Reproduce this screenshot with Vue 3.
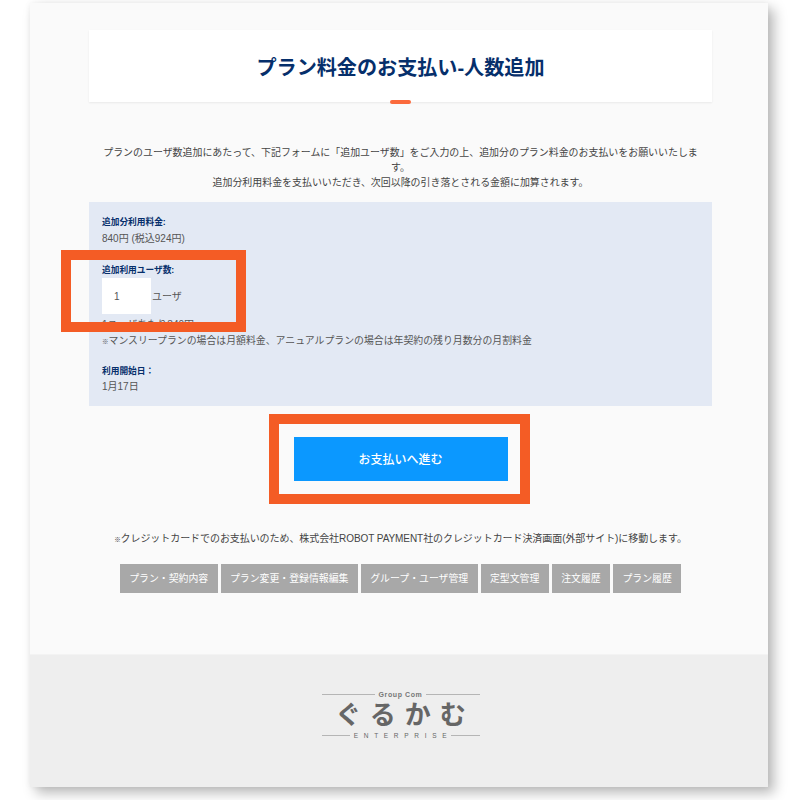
<template>
  <div class="page">
    <main class="window">
      <div class="content">
        <header class="title">
          <h1>プラン料金のお支払い-人数追加</h1>
          <span class="title-mark"></span>
        </header>

        <p class="lead">
          プランのユーザ数追加にあたって、下記フォームに「追加ユーザ数」をご入力の上、追加分のプラン料金のお支払いをお願いいたします。<br />
          追加分利用料金を支払いいただき、次回以降の引き落とされる金額に加算されます。
        </p>

        <section class="panel">
          <h2>追加分利用料金:</h2>
          <p class="price">840円 (税込924円)</p>
          <h2 class="users-label">追加利用ユーザ数:</h2>
          <div class="users">
            <span class="users-input">1</span>
            <span class="users-unit">ユーザ</span>
          </div>
          <p class="hidden-note">1ユーザあたり840円</p>
          <p class="note"><span class="kome">※</span>マンスリープランの場合は月額料金、アニュアルプランの場合は年契約の残り月数分の月割料金</p>
          <h2 class="start-label">利用開始日：</h2>
          <p class="start">1月17日</p>
        </section>

        <div class="actions">
          <button class="pay">お支払いへ進む</button>
        </div>

        <p class="card-note"><span class="kome">※</span>クレジットカードでのお支払いのため、株式会社ROBOT PAYMENT社のクレジットカード決済画面(外部サイト)に移動します。</p>

        <nav class="links">
          <a v-for="link in links" :key="link">{{ link }}</a>
        </nav>
      </div>

      <footer class="footer">
        <div class="logo">
          <div class="logo-line"><i></i><span class="logo-top">Group Com</span><i></i></div>
          <div class="logo-name">ぐるかむ</div>
          <div class="logo-line"><i></i><span class="logo-bottom">ENTERPRISE</span><i></i></div>
        </div>
      </footer>

      <div class="mark mark-users"></div>
      <div class="mark mark-pay"></div>
    </main>
  </div>
</template>

<script setup>
const links = ['プラン・契約内容', 'プラン変更・登録情報編集', 'グループ・ユーザ管理', '定型文管理', '注文履歴', 'プラン履歴']
</script>

<style>
body {
  background: #fff;
}
</style>

<style scoped>
.page {
  width: 800px;
  height: 800px;
  overflow: hidden;
  padding: 3px 0 0 30px;
  box-sizing: border-box;
  font-family: "Liberation Sans", "Noto Sans CJK JP", sans-serif;
  color: #444;
}

.window {
  position: relative;
  width: 738px;
  height: 784px;
  background: #fafafa;
  display: flex;
  flex-direction: column;
  box-shadow: 6px 6px 12px rgba(0, 0, 0, 0.28), 0 0 6px rgba(0, 0, 0, 0.05);
}

.content {
  height: 651px;
  padding: 27px 56px 0 59px;
  box-sizing: border-box;
}

.title {
  position: relative;
  height: 72px;
  background: #fff;
  box-shadow: 0 1px 2px rgba(0, 0, 0, 0.07);
  display: flex;
  align-items: center;
  justify-content: center;
}

.title h1 {
  margin: 0;
  font-size: 20.1px;
  font-weight: 700;
  color: #062f6b;
  line-height: 1;
  position: relative;
  top: 2px;
}

.title-mark {
  position: absolute;
  left: 301px;
  bottom: -2px;
  width: 21px;
  height: 4px;
  border-radius: 2px;
  background: #fb6a3c;
}

.lead {
  margin: 43px 10px 0;
  font-size: 9.95px;
  line-height: 15px;
  text-align: center;
  color: #444;
}

.kome {
  font-size: 6.5px;
}

.panel {
  margin-top: 12px;
  height: 204px;
  background: #e3e9f4;
  padding: 14px 13px 0;
  box-sizing: border-box;
  font-size: 10px;
}

.panel h2 {
  margin: 0;
  font-size: 8.7px;
  line-height: 13px;
  font-weight: 700;
  color: #062f6b;
}

.panel p {
  margin: 0;
}

.price {
  margin-top: 3px !important;
  line-height: 14px;
  color: #555;
}

.users-label {
  margin-top: 18px !important;
}

.users {
  display: flex;
  align-items: center;
  gap: 1px;
  margin-top: 1px;
  line-height: 14px;
  color: #555;
}

.users-input {
  width: 49px;
  height: 36px;
  line-height: 38px;
  padding-left: 12px;
  box-sizing: border-box;
  background: #fff;
  font-size: 10px;
}

.users-unit {
  padding-top: 2px;
}

.hidden-note {
  margin-top: 4px !important;
  height: 14px;
  line-height: 14px;
  color: #555;
}

.note {
  font-size: 9.9px;
  line-height: 14px;
  margin-top: 2px !important;
  color: #555;
}

.start-label {
  margin-top: 16px !important;
}

.start {
  margin-top: 2px !important;
  line-height: 14px;
  color: #555;
}

.actions {
  display: flex;
  justify-content: center;
  margin-top: 31px;
}

.pay {
  width: 214px;
  height: 44px;
  border: 0;
  padding: 0 1px 1px 0;
  margin-left: 1px;
  background: #0b98ff;
  color: #fff;
  font-family: inherit;
  font-size: 12px;
  font-weight: 500;
}

.card-note {
  margin: 51px 0 0;
  font-size: 10px;
  letter-spacing: -0.07px;
  line-height: 14px;
  text-align: center;
  white-space: nowrap;
  color: #444;
}

.links {
  display: flex;
  justify-content: center;
  gap: 3px;
  margin-top: 17px;
}

.links a {
  height: 29px;
  line-height: 29px;
  padding: 0 9.4px;
  background: #a8a8a8;
  color: #fff;
  font-size: 9.9px;
  white-space: nowrap;
}

.footer {
  height: 133px;
  background: #eee;
  border-top: 1px solid #f3f3f3;
  box-sizing: border-box;
  display: flex;
  justify-content: center;
  padding-top: 35px;
}

.logo {
  width: 158px;
  height: 50px;
  margin-left: 3px;
  color: #666;
}

.logo-line {
  display: flex;
  align-items: center;
  gap: 4px;
  height: 9px;
}

.logo-line i {
  flex: 1;
  height: 1px;
  background: #b5b5b5;
}

.logo-top {
  font-size: 7px;
  line-height: 9px;
  font-weight: 700;
  letter-spacing: 0.6px;
  color: #777;
}

.logo-bottom {
  font-size: 6.5px;
  line-height: 9px;
  letter-spacing: 5.7px;
  color: #666;
  margin-right: -5px;
}

.logo-name {
  margin: 4px 0;
  font-size: 26px;
  line-height: 24px;
  font-weight: 700;
  letter-spacing: 9px;
  padding-left: 9px;
  text-align: center;
  color: #666;
  white-space: nowrap;
}

/* red annotation boxes sit over the screenshot */
.mark {
  position: absolute;
  border: 10px solid #f45c25;
  box-sizing: border-box;
}

.mark-users {
  left: 31px;
  top: 247px;
  width: 185px;
  height: 82px;
}

.mark-pay {
  left: 239px;
  top: 411px;
  width: 261px;
  height: 90px;
}
</style>
